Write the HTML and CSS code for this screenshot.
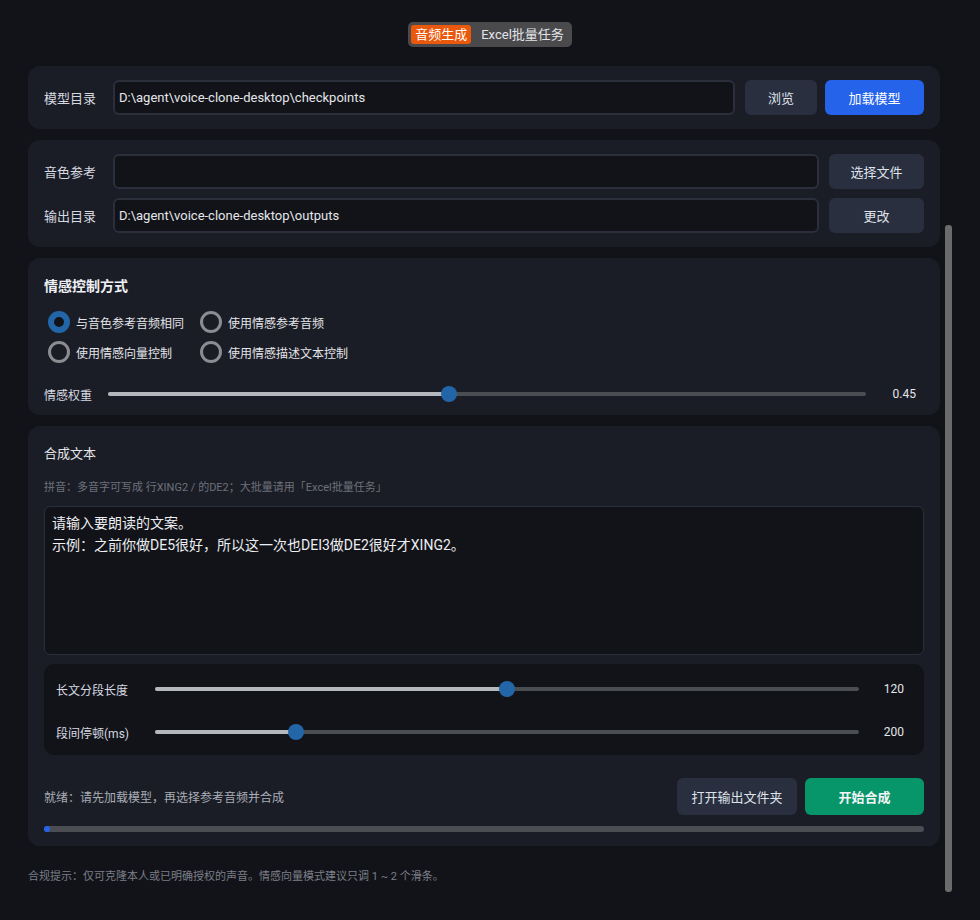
FILE: index.html
```html
<!DOCTYPE html>
<html lang="zh-CN">
<head>
    <meta charset="UTF-8">
    <title>Voice Clone Desktop</title>
    <link rel="stylesheet" href="styles.css">
</head>
<body>
    <div class="app">
        <main class="main">
            <!-- top tab switch -->
            <div class="tabs-wrap">
                <div class="tabs">
                    <span class="tab active">音频生成</span>
                    <span class="tab">Excel批量任务</span>
                </div>
            </div>

            <section class="card">
                <div class="row">
                    <span class="label">模型目录</span>
                    <div class="input">D:\agent\voice-clone-desktop\checkpoints</div>
                    <button class="btn btn-browse">浏览</button>
                    <button class="btn btn-blue">加载模型</button>
                </div>
            </section>

            <section class="card card-files">
                <div class="row">
                    <span class="label">音色参考</span>
                    <div class="input"></div>
                    <button class="btn btn-file">选择文件</button>
                </div>
                <div class="row">
                    <span class="label">输出目录</span>
                    <div class="input">D:\agent\voice-clone-desktop\outputs</div>
                    <button class="btn btn-file">更改</button>
                </div>
            </section>

            <section class="card card-emotion">
                <h3 class="card-title">情感控制方式</h3>
                <div class="radios">
                    <label class="radio checked"><span class="dot"></span>与音色参考音频相同</label>
                    <label class="radio"><span class="dot"></span>使用情感参考音频</label>
                    <label class="radio"><span class="dot"></span>使用情感向量控制</label>
                    <label class="radio"><span class="dot"></span>使用情感描述文本控制</label>
                </div>
                <div class="slider-row">
                    <span class="slider-label">情感权重</span>
                    <div class="slider">
                        <div class="fill" style="width: 45%"></div>
                        <div class="thumb" style="left: 45%"></div>
                    </div>
                    <span class="slider-value">0.45</span>
                </div>
            </section>

            <section class="card card-text">
                <div class="text-title">合成文本</div>
                <div class="hint">拼音：多音字可写成 行XING2 / 的DE2；大批量请用「Excel批量任务」</div>
                <div class="textarea">请输入要朗读的文案。<br>示例：之前你做DE5很好，所以这一次也DEI3做DE2很好才XING2。</div>

                <div class="inner-panel">
                    <div class="slider-row">
                        <span class="slider-label wide">长文分段长度</span>
                        <div class="slider">
                            <div class="fill" style="width: 50%"></div>
                            <div class="thumb" style="left: 50%"></div>
                        </div>
                        <span class="slider-value narrow">120</span>
                    </div>
                    <div class="slider-row">
                        <span class="slider-label wide">段间停顿(ms)</span>
                        <div class="slider">
                            <div class="fill" style="width: 20%"></div>
                            <div class="thumb" style="left: 20%"></div>
                        </div>
                        <span class="slider-value narrow">200</span>
                    </div>
                </div>

                <div class="actions">
                    <span class="status">就绪：请先加载模型，再选择参考音频并合成</span>
                    <button class="btn btn-open">打开输出文件夹</button>
                    <button class="btn btn-green">开始合成</button>
                </div>
                <div class="progress"><div class="progress-bar"></div></div>
            </section>

            <p class="footer">合规提示：仅可克隆本人或已明确授权的声音。情感向量模式建议只调 1 ~ 2 个滑条。</p>
        </main>
        <div class="scrollbar"></div>
    </div>
</body>
</html>
```

FILE: styles.css
```css
body {
    margin: 0;
    background: #121318;
    color: #d6d9e0;
    font-family: Roboto, "Noto Sans CJK SC", sans-serif;
    font-size: 13px;
}
.app {
    display: flex;
    height: 920px;
    overflow: hidden;
}
.main {
    width: 912px;
    margin-left: 28px;
    padding-top: 22px;
}

/* tabs */
.tabs-wrap {
    display: flex;
    justify-content: center;
    margin-left: -28px;
    margin-right: -40px;
    margin-bottom: 19px;
}
.tabs {
    display: flex;
    align-items: center;
    background: #4a4a4c;
    border-radius: 5px;
    padding: 3px;
    height: 19px;
}
.tab {
    line-height: 19px;
    padding: 0 5px 0 10px;
    color: #e2e4e8;
}
.tab.active {
    background: #ea580c;
    color: #fff;
    border-radius: 3px;
    padding: 0 4px;
}

/* cards */
.card {
    background: #1b1d26;
    border-radius: 12px;
    padding: 14px 16px;
    margin-bottom: 11px;
}
.row {
    display: flex;
    align-items: center;
    gap: 10px;
}
.card-files .row + .row {
    margin-top: 9px;
}
.label {
    width: 59px;
    color: #d6d9e0;
}
.input {
    flex: 1;
    height: 31px;
    line-height: 31px;
    padding: 0 4px;
    background: #121318;
    border: 2px solid #2b2e3b;
    border-radius: 6px;
    color: #e4e6ea;
    white-space: nowrap;
}
.btn {
    height: 35px;
    border: none;
    border-radius: 6px;
    font-family: inherit;
    font-size: 13px;
    color: #dfe2e8;
    cursor: pointer;
}
.btn-browse {
    width: 72px;
    background: #2a2f40;
}
.btn-blue {
    width: 99px;
    margin-left: -2px;
    background: #2563eb;
    color: #fff;
}
.btn-file {
    width: 95px;
    background: #2a2f40;
}

/* emotion card */
.card-emotion {
    padding-top: 18px;
    padding-bottom: 11px;
}
.card-title {
    margin: 0;
    font-size: 14px;
    font-weight: bold;
    line-height: 20px;
    color: #eef0f4;
}
.radios {
    display: grid;
    grid-template-columns: 152px auto;
    row-gap: 8px;
    margin-top: 15px;
    padding-left: 4px;
}
.radio {
    display: flex;
    align-items: center;
    gap: 6px;
    height: 22px;
    font-size: 12px;
    color: #e2e4e8;
}
.dot {
    box-sizing: border-box;
    width: 22px;
    height: 22px;
    border-radius: 50%;
    border: 3px solid #8b8d92;
}
.radio.checked .dot {
    border: 6px solid #2366a8;
    background: #121318;
}

/* sliders */
.slider-row {
    display: flex;
    align-items: center;
    height: 20px;
    font-size: 12px;
}
.card-emotion .slider-row {
    margin-top: 21px;
}
.slider-label {
    width: 64px;
    color: #d6d9e0;
}
.slider-label.wide {
    width: 99px;
}
.slider {
    flex: 1;
    position: relative;
    height: 4px;
    background: #4a4d52;
    border-radius: 2px;
}
.fill {
    height: 100%;
    background: #b4b7bc;
    border-radius: 2px;
}
.thumb {
    position: absolute;
    top: 50%;
    width: 16px;
    height: 16px;
    margin: -8px 0 0 -8px;
    border-radius: 50%;
    background: #2366a8;
}
.slider-value {
    width: 42px;
    margin-left: 8px;
    margin-right: 8px;
    text-align: right;
    color: #e4e6ea;
}
.slider-value.narrow {
    width: 37px;
    margin-right: 0;
}

/* text card */
.card-text {
    padding-top: 19px;
}
.text-title {
    line-height: 18px;
    color: #e2e4e8;
}
.hint {
    margin-top: 17px;
    font-size: 11px;
    line-height: 16px;
    color: #6d717b;
}
.textarea {
    box-sizing: border-box;
    height: 149px;
    margin-top: 10px;
    padding: 5px 7px;
    background: #121318;
    border: 1px solid #2b2e3b;
    border-radius: 6px;
    font-size: 14px;
    line-height: 22px;
    color: #eceef2;
}
.inner-panel {
    margin-top: 9px;
    padding: 15px 20px 13px 12px;
    background: #121318;
    border-radius: 10px;
}
.inner-panel .slider-row + .slider-row {
    margin-top: 23px;
}
.actions {
    display: flex;
    align-items: center;
    gap: 8px;
    margin-top: 23px;
}
.status {
    flex: 1;
    font-size: 12px;
    color: #a9adb6;
}
.btn-open {
    width: 120px;
    height: 37px;
    background: #2a2f40;
}
.btn-green {
    width: 119px;
    height: 37px;
    background: #069669;
    color: #f2f4f6;
    font-weight: bold;
}
.progress {
    height: 6px;
    margin-top: 11px;
    background: #4a4d52;
    border-radius: 3px;
}
.progress-bar {
    width: 6px;
    height: 6px;
    background: #2563eb;
    border-radius: 3px;
}
.footer {
    margin: 21px 0 0;
    font-size: 11px;
    color: #7b7f89;
}

.scrollbar {
    width: 7px;
    height: 667px;
    margin-top: 225px;
    margin-left: 5px;
    background: #6b6b6b;
    border-radius: 3px;
}
```
